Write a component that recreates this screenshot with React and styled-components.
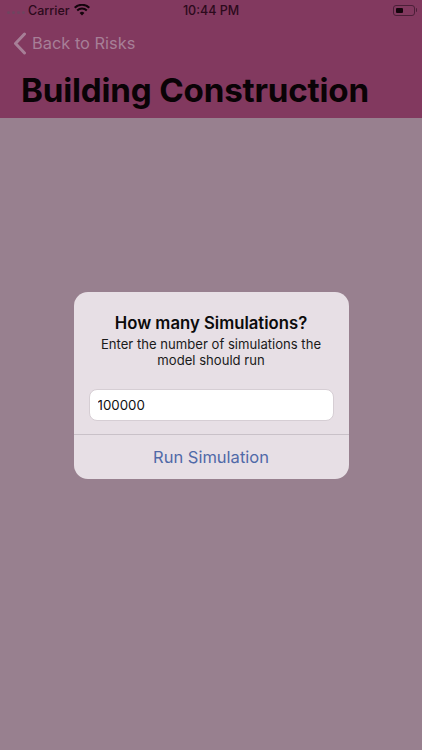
import * as React from 'react';
import styled, { createGlobalStyle } from 'styled-components';

const GlobalStyle = createGlobalStyle`
	html, body {
		margin: 0;
		padding: 0;
		background: #98808f;
	}

	* {
		box-sizing: border-box;
	}
`;

const Screen = styled.div`
	width: 422px;
	height: 750px;
	display: flex;
	flex-direction: column;
	overflow: hidden;
	background: #98808f;
	font-family: Inter, "Liberation Sans", sans-serif;
`;

const Header = styled.header`
	height: 118px;
	flex-shrink: 0;
	background: #82395f;
`;

const StatusBar = styled.div`
	height: 21px;
	display: grid;
	grid-template-columns: 1fr auto 1fr;
	align-items: center;
	padding: 0 7px 1px 7px;
	color: #2c0a1c;
	font-size: 12.5px;
	font-weight: 500;
`;

const StatusLeft = styled.div`
	display: flex;
	align-items: center;
`;

const Signal = styled.div`
	display: flex;
	gap: 2px;
	margin-right: 3px;
	padding-top: 4px;
`;

const Dot = styled.span`
	width: 3px;
	height: 3px;
	border-radius: 50%;
	background: #6f4560;
`;

const Wifi = styled.svg`
	width: 16px;
	height: 12px;
	margin-left: 4px;
`;

const Battery = styled.div`
	position: relative;
	justify-self: end;
	width: 22px;
	height: 11px;
	padding: 2px;
	border: 1px solid #4b1f38;
	border-radius: 3px;

	&::after {
		content: '';
		position: absolute;
		top: 2px;
		right: -3px;
		width: 1.5px;
		height: 4px;
		border-radius: 0 1px 1px 0;
		background: #4b1f38;
	}
`;

const BatteryLevel = styled.div`
	width: 7px;
	height: 100%;
	border-radius: 1px;
	background: #14040c;
`;

const BackRow = styled.div`
	display: flex;
	align-items: center;
	height: 44px;
	padding-left: 13px;
	color: #a77f97;
	font-size: 16.4px;
`;

const Chevron = styled.svg`
	width: 14px;
	height: 23px;
	margin-right: 5px;
`;

const Title = styled.h1`
	margin: 0;
	padding-left: 21px;
	color: #0a0306;
	font-size: 33.2px;
	font-weight: 700;
	line-height: 50px;
	letter-spacing: -0.2px;
	white-space: nowrap;
`;

const Body = styled.main`
	flex: 1;
	display: flex;
	flex-direction: column;
	align-items: center;
	padding-top: 174px;
`;

const Dialog = styled.section`
	width: 275px;
	height: 187px;
	display: flex;
	flex-direction: column;
	border-radius: 14px;
	background: #e7dfe5;
	text-align: center;
`;

const DialogText = styled.div`
	height: 97px;
	padding: 21px 16px 0;
`;

const DialogTitle = styled.h2`
	margin: 0;
	color: #0b0b0b;
	font-size: 16.7px;
	font-weight: 600;
	line-height: 20px;
`;

const DialogMessage = styled.p`
	margin: 3px 0 0;
	color: #1a1a1a;
	font-size: 13.1px;
	line-height: 16px;
`;

const AmountInput = styled.input`
	display: block;
	width: 245px;
	height: 32px;
	margin: 0 auto;
	padding: 0 8px;
	border: 1px solid #d6ced4;
	border-radius: 8px;
	outline: none;
	background: #fff;
	color: #111;
	font-family: inherit;
	font-size: 13.3px;
`;

const RunButton = styled.button`
	flex: 1;
	margin-top: 13px;
	padding: 0;
	border: 0;
	border-top: 1px solid #c9c1c8;
	background: none;
	color: #5069a8;
	font-family: inherit;
	font-size: 16.5px;
`;

const App = () => (
	<Screen>
		<GlobalStyle />
		<Header>
			<StatusBar>
				<StatusLeft>
					<Signal>
						{[0, 1, 2, 3].map((i) => <Dot key={i} />)}
					</Signal>
					Carrier
					<Wifi viewBox="0 0 16 12">
						<path d="M8 11.5 5.6 8.9a3.4 3.4 0 0 1 4.8 0ZM3.9 7.2 2.5 5.7a7.8 7.8 0 0 1 11 0l-1.4 1.5a5.8 5.8 0 0 0-8.2 0ZM1.4 4.6 0 3.1a11.3 11.3 0 0 1 16 0l-1.4 1.5a9.3 9.3 0 0 0-13.2 0Z" fill="#14040c" />
					</Wifi>
				</StatusLeft>
				<span>10:44 PM</span>
				<Battery>
					<BatteryLevel />
				</Battery>
			</StatusBar>
			<BackRow>
				<Chevron viewBox="0 0 14 23">
					<path d="M11.5 2 2.5 11.5l9 9.5" fill="none" stroke="#a77f97" strokeWidth="3" strokeLinecap="round" strokeLinejoin="round" />
				</Chevron>
				Back to Risks
			</BackRow>
			<Title>Building Construction</Title>
		</Header>
		<Body>
			<Dialog>
				<DialogText>
					<DialogTitle>How many Simulations?</DialogTitle>
					<DialogMessage>Enter the number of simulations the model should run</DialogMessage>
				</DialogText>
				<AmountInput defaultValue="100000" />
				<RunButton>Run Simulation</RunButton>
			</Dialog>
		</Body>
	</Screen>
);

export default App;
